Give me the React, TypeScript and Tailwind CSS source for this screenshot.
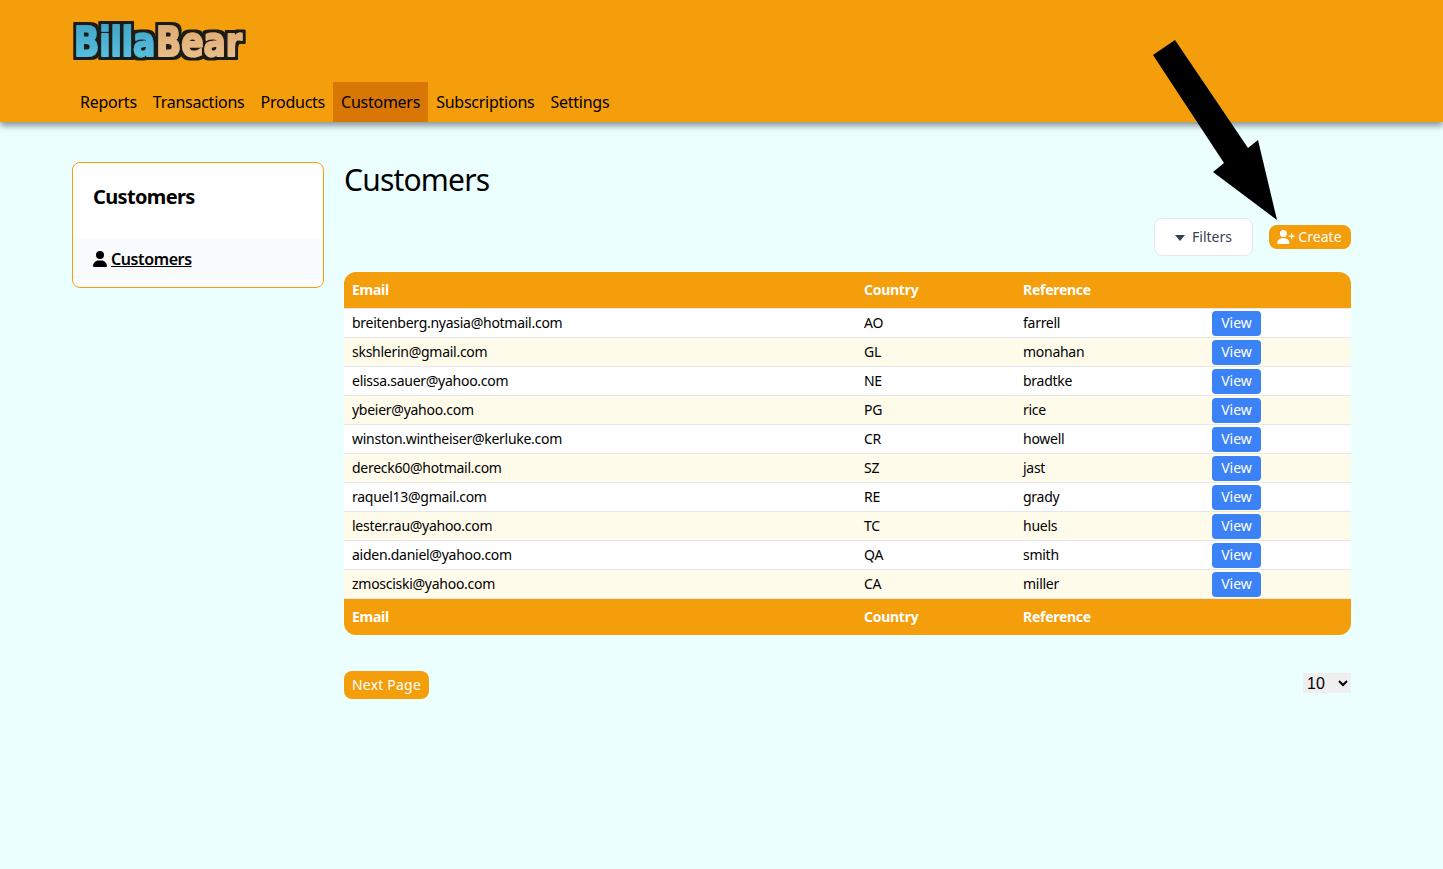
import React from 'react';

const customers = [
  ['breitenberg.nyasia@hotmail.com', 'AO', 'farrell'],
  ['skshlerin@gmail.com', 'GL', 'monahan'],
  ['elissa.sauer@yahoo.com', 'NE', 'bradtke'],
  ['ybeier@yahoo.com', 'PG', 'rice'],
  ['winston.wintheiser@kerluke.com', 'CR', 'howell'],
  ['dereck60@hotmail.com', 'SZ', 'jast'],
  ['raquel13@gmail.com', 'RE', 'grady'],
  ['lester.rau@yahoo.com', 'TC', 'huels'],
  ['aiden.daniel@yahoo.com', 'QA', 'smith'],
  ['zmosciski@yahoo.com', 'CA', 'miller'],
];

const navItems = ['Reports', 'Transactions', 'Products', 'Customers', 'Subscriptions', 'Settings'];

const Logo = () => (
  <svg width="190" height="48" viewBox="0 0 190 48">
    <defs>
      <linearGradient id="blue" x1="0" y1="0" x2="0" y2="1">
        <stop offset="0" stopColor="#3f9fc4" />
        <stop offset="1" stopColor="#5cc6e2" />
      </linearGradient>
      <linearGradient id="tan" x1="0" y1="0" x2="0" y2="1">
        <stop offset="0" stopColor="#dba56c" />
        <stop offset="1" stopColor="#edc48f" />
      </linearGradient>
      {/* dark outline round the letters */}
      <filter id="outline" x="-10%" y="-25%" width="120%" height="150%">
        <feMorphology in="SourceAlpha" operator="dilate" radius="2.6" result="fat" />
        <feFlood floodColor="#1f1a17" />
        <feComposite in2="fat" operator="in" result="edge" />
        <feMerge>
          <feMergeNode in="edge" />
          <feMergeNode in="SourceGraphic" />
        </feMerge>
      </filter>
    </defs>
    <g fontFamily="'DejaVu Sans', sans-serif" fontWeight="700" fontSize="33" strokeLinejoin="round" filter="url(#outline)">
      <text x="6" y="29.6" transform="scale(1 1.25)" fill="url(#blue)" stroke="url(#blue)" strokeWidth="1.5">Billa</text>
      <text x="88" y="29.6" transform="scale(1 1.25)" fill="url(#tan)" stroke="url(#tan)" strokeWidth="1.5">Bear</text>
    </g>
  </svg>
);

const UserIcon = ({ className }: { className?: string }) => (
  <svg viewBox="0 0 448 512" className={className} fill="currentColor">
    <path d="M224 256a128 128 0 1 0 0-256 128 128 0 1 0 0 256zm-45.7 48C79.8 304 0 383.8 0 482.3 0 498.7 13.3 512 29.7 512h388.6c16.4 0 29.7-13.3 29.7-29.7C448 383.8 368.2 304 269.7 304h-91.4z" />
  </svg>
);

const UserPlusIcon = ({ className }: { className?: string }) => (
  <svg viewBox="0 0 640 512" className={className} fill="currentColor">
    <path d="M96 128a128 128 0 1 1 256 0 128 128 0 1 1-256 0zM0 482.3C0 383.8 79.8 304 178.3 304h91.4c98.5 0 178.3 79.8 178.3 178.3 0 16.4-13.3 29.7-29.7 29.7H29.7C13.3 512 0 498.7 0 482.3zM504 312v-64h-64c-13.3 0-24-10.7-24-24s10.7-24 24-24h64v-64c0-13.3 10.7-24 24-24s24 10.7 24 24v64h64c13.3 0 24 10.7 24 24s-10.7 24-24 24h-64v64c0 13.3-10.7 24-24 24s-24-10.7-24-24z" />
  </svg>
);

const Arrow = () => (
  <svg className="absolute left-[1153px] top-[40px] pointer-events-none" width="126" height="180" viewBox="0 0 126 180">
    <path d="M0 15 L22 0 L95 108 L105 100 L124 180 L60 132 L71 123 Z" fill="#000" />
  </svg>
);

export default function App() {
  return (
    <div className="relative min-h-[869px] bg-[#ebffff] font-['Noto_Sans',sans-serif] text-black">
      <header className="h-[122px] bg-[#f59e0b] shadow-[0_4px_6px_rgba(0,0,0,0.4)] relative">
        <div className="pl-[68px] pt-[19px] h-[82px]">
          <Logo />
        </div>
        <nav className="flex pl-[72px] h-[40px]">
          {navItems.map((item) => (
            <a
              key={item}
              className={`h-[40px] px-[8px] flex items-center text-[16px] tracking-[-0.25px] ${item === 'Customers' ? 'bg-[#d97706]' : ''}`}
            >
              {item}
            </a>
          ))}
        </nav>
      </header>

      <main className="flex pl-[72px] pt-[40px] gap-[20px] w-[1351px]">
        <aside className="w-[252px] h-[126px] bg-white border border-[#f59e0b] rounded-lg overflow-hidden shrink-0">
          <h2 className="pl-[20px] pt-[20px] h-[76px] text-[20px] leading-[28px] font-bold tracking-[-0.65px]">Customers</h2>
          <a className="h-[40px] bg-[#f9fafb] pl-[20px] flex items-center font-semibold text-[16px] tracking-[-0.4px] underline">
            <UserIcon className="w-[14px] h-[16px] mr-[4px]" />
            Customers
          </a>
        </aside>

        <section className="flex-1 min-w-0">
          <h1 className="text-[30px] leading-[36px] tracking-[-0.8px]">Customers</h1>

          <div className="flex justify-end items-center gap-[16px] mt-[20px] h-[38px]">
            <button className="w-[99px] h-[38px] bg-white border border-[#e5e7eb] rounded-lg flex items-center justify-center gap-[7px] text-[14px] leading-[18px] text-[#374151]">
              <svg width="10" height="6" viewBox="0 0 10 6" className="text-[#374151] mt-[1px]" fill="currentColor">
                <path d="M0 0h10L5 6z" />
              </svg>
              Filters
            </button>
            <button className="w-[82px] h-[24px] bg-[#f59e0b] rounded-lg flex items-center justify-center pr-[1px] text-[14px] leading-[18px] tracking-[0.05px] text-white">
              <UserPlusIcon className="w-[18px] h-[14px] mr-[3px]" />
              Create
            </button>
          </div>

          <table className="w-[1007px] mt-[16px] table-fixed border-separate border-spacing-0 text-[14px] tracking-[-0.27px]">
            <colgroup>
              <col className="w-[512px]" />
              <col className="w-[159px]" />
              <col className="w-[189px]" />
              <col />
            </colgroup>
            <thead>
              <tr className="bg-[#f59e0b] text-white font-bold h-[36px] text-left">
                <th className="px-[8px] pb-[2px] rounded-tl-xl">Email</th>
                <th className="px-[8px] pb-[2px]">Country</th>
                <th className="px-[8px] pb-[2px]">Reference</th>
                <th className="rounded-tr-xl"></th>
              </tr>
            </thead>
            <tbody>
              {customers.map(([email, country, reference], i) => (
                <tr key={email} className={`h-[29px] ${i % 2 === 1 ? 'bg-[#fffbeb]' : 'bg-white'}`}>
                  <td className="px-[8px] pb-[1px] border-t border-[#e5e7eb]">{email}</td>
                  <td className="px-[8px] pb-[1px] border-t border-[#e5e7eb]">{country}</td>
                  <td className="px-[8px] pb-[1px] border-t border-[#e5e7eb]">{reference}</td>
                  <td className="pl-[8px] border-t border-[#e5e7eb]">
                    <button className="w-[49px] h-[25px] bg-[#3b82f6] rounded text-white tracking-[0] flex items-center justify-center pb-[2px]">View</button>
                  </td>
                </tr>
              ))}
            </tbody>
            <tfoot>
              <tr className="bg-[#f59e0b] text-white font-bold h-[37px] text-left">
                <th className="px-[8px] pb-[2px] border-t border-[#e5e7eb] rounded-bl-xl">Email</th>
                <th className="px-[8px] pb-[2px] border-t border-[#e5e7eb]">Country</th>
                <th className="px-[8px] pb-[2px] border-t border-[#e5e7eb]">Reference</th>
                <th className="border-t border-[#e5e7eb] rounded-br-xl"></th>
              </tr>
            </tfoot>
          </table>

          <div className="flex justify-between items-start mt-[36px]">
            <button className="w-[85px] h-[28px] bg-[#f59e0b] rounded-lg text-white text-[14px] leading-[18px] tracking-[0.2px]">Next Page</button>
            <select className="w-[48px] h-[20px] bg-[#efefef] mt-[2px] font-['Liberation_Sans',sans-serif] text-[16px]" defaultValue="10">
              <option>10</option>
              <option>25</option>
              <option>50</option>
            </select>
          </div>
        </section>
      </main>

      <Arrow />
    </div>
  );
}
